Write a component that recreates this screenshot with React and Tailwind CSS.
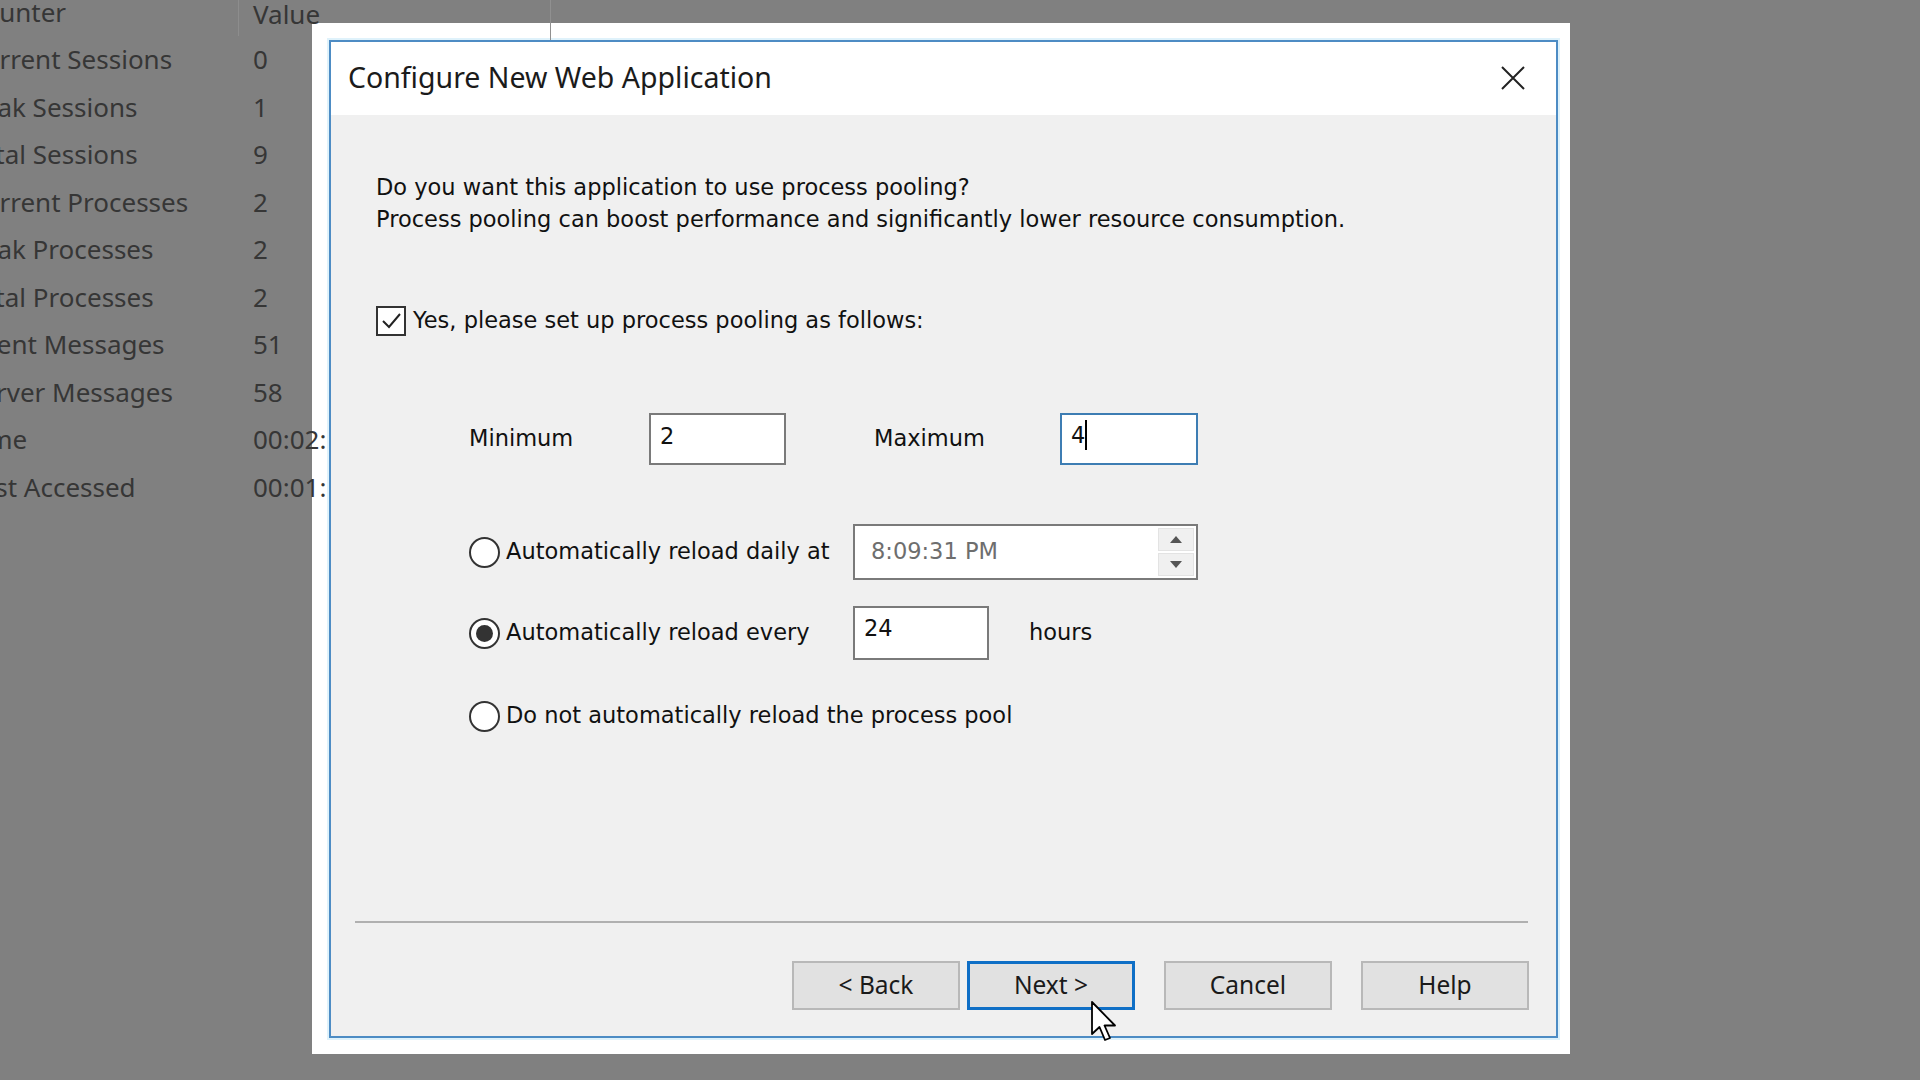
import React from "react";

const ROWS = [
  ["Current Sessions", "0"],
  ["Peak Sessions", "1"],
  ["Total Sessions", "9"],
  ["Current Processes", "2"],
  ["Peak Processes", "2"],
  ["Total Processes", "2"],
  ["Client Messages", "51"],
  ["Server Messages", "58"],
  ["Time", "00:02:14"],
  ["Last Accessed", "00:01:37"],
];

const body = { fontFamily: '"DejaVu Sans", Verdana, sans-serif' };
const ui = { fontFamily: '"Noto Sans", "Open Sans", sans-serif' };

function Radio({ checked }) {
  return (
    <span className="w-[31px] h-[31px] shrink-0 rounded-full border-2 border-[#333] bg-white flex items-center justify-center">
      {checked && <span className="w-[17px] h-[17px] rounded-full bg-[#333]" />}
    </span>
  );
}

function Button({ children, focused }) {
  return (
    <div
      className={
        "w-[168px] h-[49px] flex items-center justify-center text-[24.5px] text-[#1a1a1a] bg-[#e1e1e1] " +
        (focused ? "border-[3px] border-[#0f6fc6]" : "border-2 border-[#b8b8b8]")
      }
      style={ui}
    >
      {children}
    </div>
  );
}

export default function App() {
  return (
    <div className="relative w-[1920px] h-[1080px] overflow-hidden bg-[#808080]">
      {/* background counters table */}
      <div className="relative z-10 flex flex-col mt-[-12px] text-[26px] text-[#363636]" style={ui}>
        <div className="flex h-[48px] items-center">
          <div className="w-[272px] ml-[-33px] shrink-0 h-full flex items-center border-r border-[#8d8d8d]">
            Counter
          </div>
          <div className="w-[312px] pl-[14px] h-[52px] self-start flex items-center border-r border-[#909090]">Value</div>
        </div>
        {ROWS.map(([name, value]) => (
          <div key={name} className="flex h-[47.5px] items-center">
            <div className="w-[286px] ml-[-33px] shrink-0">{name}</div>
            <div className="w-[74px] overflow-hidden whitespace-nowrap">{value}</div>
          </div>
        ))}
      </div>

      {/* dialog window */}
      <div className="absolute left-[312px] top-[23px] w-[1258px] h-[1031px] bg-white pt-[17px] pl-[17px] pr-[12px] pb-[16px]">
        <div className="w-full h-full border-2 border-[#4d8cc4] flex flex-col shadow-[0_0_0_2px_#dff2fb]">
          {/* title bar */}
          <div className="h-[73px] shrink-0 bg-white flex items-center justify-between pl-[17px] pr-[30px]">
            <span className="text-[28.5px] text-[#1b1b1b] mt-[-2px]" style={ui}>
              Configure New Web Application
            </span>
            <svg width="26" height="26" viewBox="0 0 26 26" className="mt-[-2px]">
              <path d="M2 2 L24 24 M24 2 L2 24" stroke="#222" strokeWidth="2" fill="none" />
            </svg>
          </div>

          {/* body */}
          <div className="flex-1 bg-[#f0f0f0] flex flex-col text-[22.5px] text-[#111]" style={body}>
            <div className="pt-[56px] pl-[45px] leading-[32px]">
              <div>Do you want this application to use process pooling?</div>
              <div>Process pooling can boost performance and significantly lower resource consumption.</div>
            </div>

            <div className="mt-[70px] pl-[45px] h-[32px] flex items-center gap-[7px]">
              <span className="w-[30px] h-[30px] border-2 border-[#333] bg-white flex items-center justify-center">
                <svg width="22" height="22" viewBox="0 0 22 22">
                  <path d="M3 11 L9 17 L20 4" stroke="#222" strokeWidth="2" fill="none" />
                </svg>
              </span>
              <span>Yes, please set up process pooling as follows:</span>
            </div>

            <div className="mt-[76px] pl-[138px] h-[52px] flex items-center">
              <span className="w-[180px] shrink-0">Minimum</span>
              <div className="w-[137px] h-[52px] bg-white border-2 border-[#7a7a7a] pl-[9px] pt-[5px] leading-[32px]">2</div>
              <span className="w-[88px] shrink-0" />
              <span className="w-[186px] shrink-0">Maximum</span>
              <div className="w-[138px] h-[52px] bg-white border-2 border-[#3d7db3] pl-[9px] pt-[4px] leading-[32px] flex items-start">
                <span>4</span>
                <span className="w-[2px] h-[30px] bg-black mt-[1px]" />
              </div>
            </div>

            <div className="mt-[59px] pl-[138px] h-[56px] flex items-center">
              <div className="w-[384px] shrink-0 flex items-center gap-[6px]">
                <Radio />
                <span>Automatically reload daily at</span>
              </div>
              <div className="w-[345px] h-[56px] bg-white border-2 border-[#7a7a7a] flex items-center justify-between pl-[16px] pr-[2px]">
                <span className="text-[#6e6e6e]">8:09:31 PM</span>
                <div className="flex flex-col w-[36px] h-[48px] gap-[2px]">
                  <div className="flex-1 bg-[#f0f0f0] border border-[#e3e3e3] flex items-center justify-center">
                    <svg width="12" height="7" viewBox="0 0 12 7"><path d="M0 7 L6 0 L12 7 Z" fill="#555" /></svg>
                  </div>
                  <div className="flex-1 bg-[#f0f0f0] border border-[#e3e3e3] flex items-center justify-center">
                    <svg width="12" height="7" viewBox="0 0 12 7"><path d="M0 0 L12 0 L6 7 Z" fill="#555" /></svg>
                  </div>
                </div>
              </div>
            </div>

            <div className="mt-[26px] pl-[138px] h-[54px] flex items-center">
              <div className="w-[384px] shrink-0 flex items-center gap-[6px]">
                <Radio checked />
                <span>Automatically reload every</span>
              </div>
              <div className="w-[136px] h-[54px] bg-white border-2 border-[#7a7a7a] pl-[9px] pt-[4px] leading-[32px]">24</div>
              <span className="ml-[40px]">hours</span>
            </div>

            <div className="mt-[40px] pl-[138px] h-[32px] flex items-center gap-[6px]">
              <Radio />
              <span>Do not automatically reload the process pool</span>
            </div>

            <div className="mt-[189px] ml-[24px] mr-[28px] h-[2px] bg-[#b0b0b0]" />

            <div className="mt-[38px] h-[49px] flex items-center pl-[461px] gap-[7px]">
              <Button>&lt; Back</Button>
              <div className="relative">
                <Button focused>Next &gt;</Button>
                <svg
                  className="absolute left-[124px] top-[40px]"
                  width="28"
                  height="42"
                  viewBox="0 0 28 42"
                >
                  <path
                    d="M1 1 L1 33 L8.5 26 L14 39 L19 37 L13.5 24.5 L24 24.5 Z"
                    fill="#fff"
                    stroke="#000"
                    strokeWidth="1.8"
                    strokeLinejoin="round"
                  />
                </svg>
              </div>
              <span className="w-[15px]" />
              <Button>Cancel</Button>
              <span className="w-[15px]" />
              <Button>Help</Button>
            </div>
          </div>
        </div>
      </div>
    </div>
  );
}
